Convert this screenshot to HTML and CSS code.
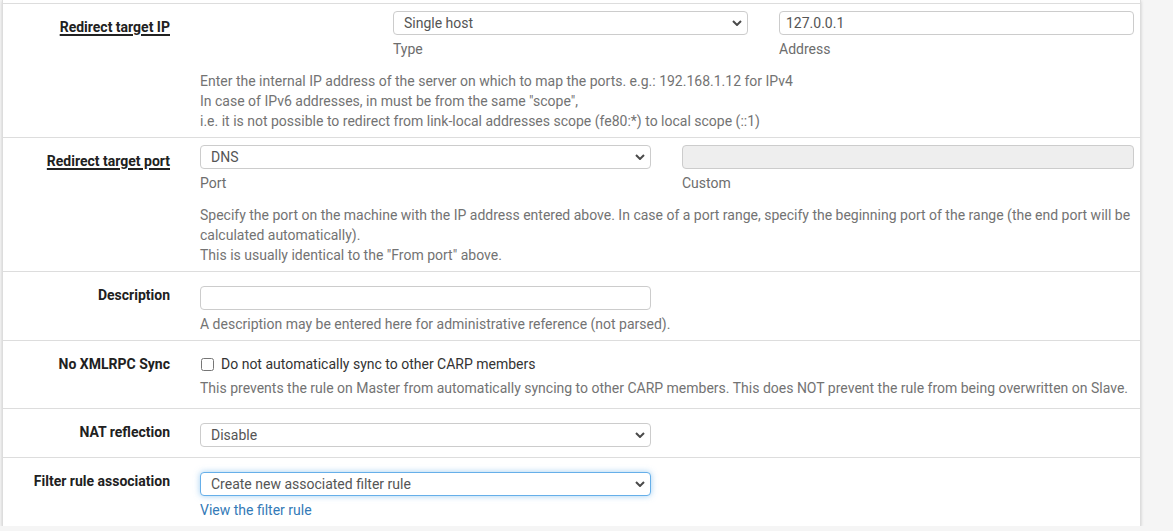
FILE: index.html
```html
<!DOCTYPE html>
<html lang="en">
<head>
    <meta charset="UTF-8">
    <meta name="viewport" content="width=device-width, initial-scale=1.0">
    <title>Firewall: NAT: Port Forward: Edit</title>
    <link rel="stylesheet" href="styles.css">
</head>
<body>
    <div class="panel">
        <div class="panel-top"></div>

        <!-- Redirect target IP -->
        <div class="form-group">
            <label class="control-label"><span class="element-required">Redirect target IP</span></label>
            <div class="controls pad-tight">
                <div class="pair pair-offset">
                    <div class="field">
                        <div class="select-wrap">
                            <select class="form-control">
                                <option>Single host</option>
                                <option>Alias</option>
                            </select>
                            <svg class="chevron" width="10" height="6" viewBox="0 0 10 6"><polyline points="1,1 5,5 9,1" fill="none" stroke="#4a4a4a" stroke-width="2"/></svg>
                        </div>
                        <span class="field-label">Type</span>
                    </div>
                    <div class="field">
                        <input class="form-control" type="text" value="127.0.0.1">
                        <span class="field-label">Address</span>
                    </div>
                </div>
                <div class="help-block help-gap">
                    Enter the internal IP address of the server on which to map the ports. e.g.: 192.168.1.12 for IPv4<br>
                    In case of IPv6 addresses, in must be from the same "scope",<br>
                    i.e. it is not possible to redirect from link-local addresses scope (fe80:*) to local scope (::1)
                </div>
            </div>
        </div>

        <!-- Redirect target port -->
        <div class="form-group">
            <label class="control-label"><span class="element-required">Redirect target port</span></label>
            <div class="controls pad-tight">
                <div class="pair pair-wide">
                    <div class="field">
                        <div class="select-wrap">
                            <select class="form-control">
                                <option>DNS</option>
                                <option>(other)</option>
                            </select>
                            <svg class="chevron" width="10" height="6" viewBox="0 0 10 6"><polyline points="1,1 5,5 9,1" fill="none" stroke="#4a4a4a" stroke-width="2"/></svg>
                        </div>
                        <span class="field-label">Port</span>
                    </div>
                    <div class="field">
                        <input class="form-control" type="text" disabled>
                        <span class="field-label">Custom</span>
                    </div>
                </div>
                <div class="help-block help-gap">
                    Specify the port on the machine with the IP address entered above. In case of a port range, specify the beginning port of the range (the end port will be calculated automatically).<br>
                    This is usually identical to the "From port" above.
                </div>
            </div>
        </div>

        <!-- Description -->
        <div class="form-group">
            <label class="control-label">Description</label>
            <div class="controls">
                <input class="form-control half" type="text">
                <div class="help-block">A description may be entered here for administrative reference (not parsed).</div>
            </div>
        </div>

        <!-- No XMLRPC Sync -->
        <div class="form-group">
            <label class="control-label">No XMLRPC Sync</label>
            <div class="controls pad-check">
                <label class="checkbox"><input type="checkbox"> Do not automatically sync to other CARP members</label>
                <div class="help-block">This prevents the rule on Master from automatically syncing to other CARP members. This does NOT prevent the rule from being overwritten on Slave.</div>
            </div>
        </div>

        <!-- NAT reflection -->
        <div class="form-group">
            <label class="control-label">NAT reflection</label>
            <div class="controls pad-bottom">
                <div class="select-wrap half">
                    <select class="form-control">
                        <option>Disable</option>
                        <option>Use system default</option>
                    </select>
                    <svg class="chevron" width="10" height="6" viewBox="0 0 10 6"><polyline points="1,1 5,5 9,1" fill="none" stroke="#4a4a4a" stroke-width="2"/></svg>
                </div>
            </div>
        </div>

        <!-- Filter rule association -->
        <div class="form-group">
            <label class="control-label">Filter rule association</label>
            <div class="controls">
                <div class="select-wrap half">
                    <select class="form-control focused">
                        <option>Create new associated filter rule</option>
                        <option>None</option>
                    </select>
                    <svg class="chevron" width="10" height="6" viewBox="0 0 10 6"><polyline points="1,1 5,5 9,1" fill="none" stroke="#4a4a4a" stroke-width="2"/></svg>
                </div>
                <a class="help-link" href="#">View the filter rule</a>
            </div>
        </div>
    </div>
</body>
</html>
```

FILE: styles.css
```css
body {
    font-family: Roboto, 'Liberation Sans', sans-serif;
    font-size: 14px;
    line-height: 20px;
    margin: 0;
    background: #f5f5f5;
    color: #212121;
}

.panel {
    margin-left: 2px;
    width: 1137px;
    background: #fff;
    border-left: 1px solid #ddd;
    border-right: 1px solid #ddd;
    box-shadow: 0 1px 3px rgba(0, 0, 0, 0.18);
}

.panel-top {
    height: 3px;
}

.form-group {
    display: flex;
    align-items: flex-start;
    border-top: 1px solid #ddd;
}

.control-label {
    width: 167px;
    flex-shrink: 0;
    padding-top: 13px;
    text-align: right;
    font-weight: 700;
    color: #212121;
}

.element-required {
    text-decoration: underline;
    text-decoration-thickness: 2px;
    text-underline-offset: 2px;
}

.controls {
    width: 934px;
    margin-left: 30px;
    padding: 14px 0 6px;
}

.pad-tight {
    padding-top: 7px;
}

.pad-check {
    padding-top: 13px;
    padding-bottom: 10px;
}

.pad-bottom {
    padding-bottom: 10px;
}

.pair {
    display: grid;
    column-gap: 31px;
}

.pair-offset {
    padding-left: 193px;
    grid-template-columns: 355px 355px;
}

.pair-wide {
    grid-template-columns: 451px 452px;
}

.field {
    display: flex;
    flex-direction: column;
}

.field-label {
    margin-top: 4px;
    color: #6d6d6d;
}

.form-control {
    display: block;
    box-sizing: border-box;
    width: 100%;
    height: 24px;
    margin: 0;
    padding: 0 6px;
    border: 1px solid #ccc;
    border-radius: 4px;
    background: #fff;
    font-family: Roboto, 'Liberation Sans', sans-serif;
    font-size: 14px;
    color: #555;
    outline: none;
}

.form-control:disabled {
    background: #eee;
}

select.form-control {
    -webkit-appearance: none;
    appearance: none;
    padding-left: 10px;
}

.form-control.focused {
    border-color: #66afe9;
    box-shadow: 0 0 6px rgba(102, 175, 233, 0.6);
}

.half {
    width: 451px;
}

.select-wrap {
    position: relative;
}

.chevron {
    position: absolute;
    right: 6px;
    top: 9px;
    pointer-events: none;
}

.help-block {
    margin-top: 4px;
    color: #737373;
}

.help-gap {
    margin-top: 12px;
}

.checkbox {
    display: flex;
    align-items: center;
    color: #333;
}

.checkbox input {
    width: 13px;
    height: 13px;
    margin: 0 7px 0 1px;
}

.help-link {
    display: block;
    margin-top: 4px;
    color: #337ab7;
    text-decoration: none;
}
```
